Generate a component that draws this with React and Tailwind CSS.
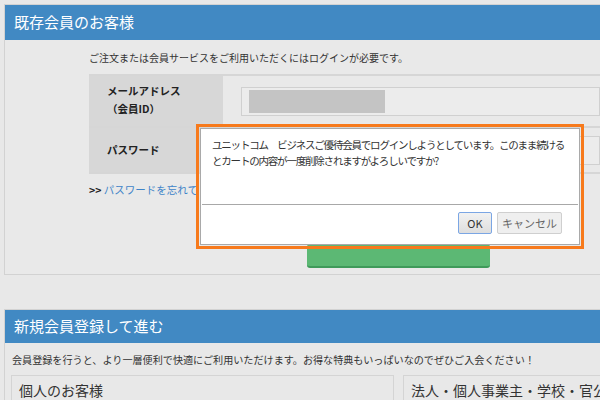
export default function App() {
  const font = { fontFamily: '"Noto Sans CJK JP", "Noto Sans", sans-serif' };
  return (
    <div className="relative w-[600px] h-[400px] overflow-hidden bg-[#e8e8e8] text-[#333]" style={font}>
      <div className="pl-[4px] pt-[4px]">
        {/* existing members */}
        <section className="h-[271px] border border-[#d2d2d2] border-r-0 bg-[#e9e9e9]">
          <div className="h-[35px] bg-[#4189c3] flex items-center pl-[9px] text-white text-[15px]">既存会員のお客様</div>
          <div className="pl-[84px] pt-[10px]">
            <p className="text-[10px] leading-[16px]">ご注文または会員サービスをご利用いただくにはログインが必要です。</p>
            <div className="mt-[8px] border-t-2 border-[#d6d6d6]">
              <div className="flex h-[52px] border-b-2 border-[#d6d6d6]">
                <div className="w-[134px] shrink-0 bg-[#d7d7d7] flex flex-col justify-center pl-[18px] pb-[2px] text-[10.5px] font-bold leading-[18px] text-[#222]">
                  <span>メールアドレス</span>
                  <span>（会員ID）</span>
                </div>
                <div className="flex-1 pl-[18px] flex items-center">
                  <div className="w-full h-[29px] border border-[#d0d0d0] bg-[#ececec] p-[2px] pl-[7px]">
                    <div className="w-[136px] h-full bg-[#c4c4c4]"></div>
                  </div>
                </div>
              </div>
              <div className="flex h-[46px] border-b-2 border-[#d6d6d6]">
                <div className="w-[134px] shrink-0 bg-[#d7d7d7] flex items-center pl-[18px] text-[10.5px] font-bold text-[#222]">パスワード</div>
                <div className="flex-1 pl-[18px] flex items-center">
                  <div className="w-full h-[29px] border border-[#d0d0d0] bg-[#ececec]"></div>
                </div>
              </div>
            </div>
            <p className="mt-[8px] text-[10.5px] leading-[16px]">
              <span className="font-bold text-[#222]">&gt;&gt; </span>
              <span className="text-[#3f84c8]">パスワードを忘れてしまった方はこちら</span>
            </p>
            <div className="mt-[46px] ml-[218px] w-[183px] h-[24px] rounded-[3px] bg-[#5cb874] border-b-2 border-[#3f9a5a]"></div>
          </div>
        </section>

        {/* new registration */}
        <section className="mt-[34px] border border-[#d2d2d2] border-r-0 h-[200px]">
          <div className="h-[33px] bg-[#4189c3] flex items-center pl-[9px] text-white text-[15px]">新規会員登録して進む</div>
          <p className="pl-[7px] pt-[9px] text-[10.1px] leading-[16px]">会員登録を行うと、より一層便利で快適にご利用いただけます。お得な特典もいっぱいなのでぜひご入会ください！</p>
          <div className="flex gap-[9px] pl-[6px] pt-[7px]">
            <div className="w-[383px] h-[60px] border border-[#d4d4d4] pl-[7px] pt-[4px] text-[14px] text-[#333]">個人のお客様</div>
            <div className="flex-1 h-[60px] border border-[#d4d4d4] border-r-0 pl-[7px] pt-[4px] text-[14px] text-[#333] whitespace-nowrap overflow-hidden">法人・個人事業主・学校・官公庁</div>
          </div>
        </section>
      </div>

      {/* confirm dialog */}
      <div className="absolute left-[196px] top-[124px] w-[388px] h-[125px] border-[3px] border-[#f77a1c] p-[1px]">
        <div className="h-full bg-white border border-[#a9a9a9] flex flex-col">
          <p className="px-[11px] pt-[8px] text-[10.5px] tracking-[-1.2px] leading-[16px] text-[#333] h-[75px] whitespace-nowrap overflow-hidden">
            ユニットコム　ビジネスご優待会員でログインしようとしています。このまま続ける
            <br />
            とカートの内容が一度削除されますがよろしいですか?
          </p>
          <div className="mx-[1px] border-t border-[#a8a8a8]"></div>
          <div className="flex justify-end gap-[5px] pr-[17px] pt-[7px]">
            <button className="w-[34px] h-[22px] rounded-[2px] border border-[#7ba6e4] bg-gradient-to-b from-[#f2f2f2] to-[#dedede] text-[11px] text-[#333]">OK</button>
            <button className="w-[65px] h-[22px] rounded-[2px] border border-[#cfcfcf] bg-[#efefef] text-[11px] text-[#666]">キャンセル</button>
          </div>
        </div>
      </div>
    </div>
  );
}
